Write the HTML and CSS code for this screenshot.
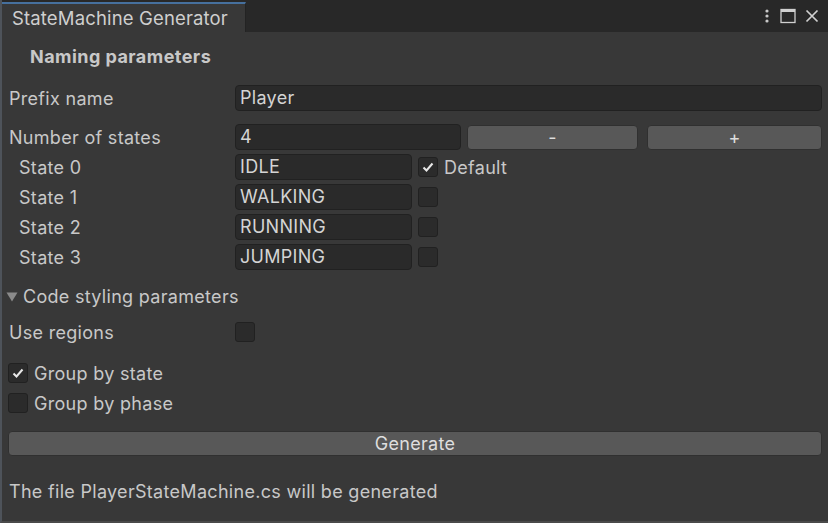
FILE: index.html
```html
<!DOCTYPE html>
<html>
<head>
<meta charset="utf-8">
<link rel="stylesheet" href="styles.css">
</head>
<body>
<div class="window">
  <div class="titlebar">
    <div class="tab">StateMachine Generator</div>
    <div class="actions">
      <svg class="icon" width="10" height="16" viewBox="0 0 10 16"><circle cx="5" cy="3" r="1.6" fill="#c8c8c8"/><circle cx="5" cy="8" r="1.6" fill="#c8c8c8"/><circle cx="5" cy="13" r="1.6" fill="#c8c8c8"/></svg>
      <svg class="icon" width="16" height="16" viewBox="0 0 16 16"><rect x="1" y="1.5" width="14" height="13" fill="none" stroke="#d0d0d0" stroke-width="1.3"/><rect x="1" y="1" width="14" height="3" fill="#d0d0d0"/></svg>
      <svg class="icon" width="16" height="16" viewBox="0 0 16 16"><path d="M2.5 2.5 L13.5 13.5 M13.5 2.5 L2.5 13.5" stroke="#d0d0d0" stroke-width="1.7"/></svg>
    </div>
  </div>
  <div class="content">
    <div class="section-title">Naming parameters</div>
    <div class="row prefix">
      <div class="label">Prefix name</div>
      <div class="field grow">Player</div>
    </div>
    <div class="row count">
      <div class="label">Number of states</div>
      <div class="field num">4</div>
      <div class="btn minus">-</div>
      <div class="btn plus">+</div>
    </div>
    <div class="states">
      <div class="row state">
        <div class="label indent">State 0</div>
        <div class="field short">IDLE</div>
        <div class="check on"><svg width="14" height="14" viewBox="0 0 14 14"><path d="M2.5 7.5 L5.5 10.5 L11.5 3.5" fill="none" stroke="#e8e8e8" stroke-width="2"/></svg></div>
        <div class="check-label">Default</div>
      </div>
      <div class="row state">
        <div class="label indent">State 1</div>
        <div class="field short">WALKING</div>
        <div class="check"></div>
      </div>
      <div class="row state">
        <div class="label indent">State 2</div>
        <div class="field short">RUNNING</div>
        <div class="check"></div>
      </div>
      <div class="row state">
        <div class="label indent">State 3</div>
        <div class="field short">JUMPING</div>
        <div class="check"></div>
      </div>
    </div>
    <div class="foldout">
      <svg class="tri" width="12" height="10" viewBox="0 0 12 10"><path d="M0.5 0.5 L11.5 0.5 L6 9.5 Z" fill="#8a8a8a"/></svg>
      <span>Code styling parameters</span>
    </div>
    <div class="row toggle regions">
      <div class="label">Use regions</div>
      <div class="check"></div>
    </div>
    <div class="row toggle group-state">
      <div class="check left on"><svg width="14" height="14" viewBox="0 0 14 14"><path d="M2.5 7.5 L5.5 10.5 L11.5 3.5" fill="none" stroke="#e8e8e8" stroke-width="2"/></svg></div>
      <div class="check-label">Group by state</div>
    </div>
    <div class="row toggle group-phase">
      <div class="check left"></div>
      <div class="check-label">Group by phase</div>
    </div>
    <div class="btn generate">Generate</div>
    <div class="note">The file PlayerStateMachine.cs will be generated</div>
  </div>
</div>
</body>
</html>
```

FILE: styles.css
```css
html, body {
  margin: 0;
  padding: 0;
  background: #282828;
}
body {
  font-family: Inter, "Noto Sans", sans-serif;
  font-size: 18px;
  letter-spacing: 0.3px;
  color: #c8c8c8;
}
.window {
  width: 828px;
  height: 523px;
  box-sizing: border-box;
  background: #383838;
  border-left: 2px solid #4e535a;
  border-bottom: 2px solid #4a4a4a;
  display: flex;
  flex-direction: column;
  overflow: hidden;
}
.titlebar {
  height: 32px;
  flex: none;
  background: #282828;
  display: flex;
  align-items: stretch;
}
.tab {
  margin-top: 2px;
  width: 244px;
  box-sizing: border-box;
  border-top: 2px solid #46709e;
  border-right: 1px solid #232323;
  background: #383838;
  padding-left: 10px;
  display: flex;
  align-items: center;
  font-size: 18.5px;
  letter-spacing: 0.15px;
  color: #cfcfcf;
}
.actions {
  margin-left: auto;
  display: flex;
  align-items: center;
  gap: 8px;
  padding-right: 8px;
}
.icon {
  display: block;
}
.content {
  padding: 0 6px 0 7px;
  display: flex;
  flex-direction: column;
}
.section-title {
  margin-top: 12px;
  height: 26px;
  line-height: 26px;
  padding-left: 21px;
  font-weight: 700;
  letter-spacing: 0.45px;
  color: #c8c8c8;
}
.row {
  display: flex;
  align-items: center;
  height: 26px;
}
.label {
  width: 226px;
  flex: none;
}
.label.indent {
  padding-left: 10px;
  box-sizing: border-box;
}
.field {
  height: 26px;
  box-sizing: border-box;
  background: #2a2a2a;
  border: 1px solid #212121;
  border-radius: 4px;
  padding-left: 4px;
  line-height: 24px;
  color: #d4d4d4;
}
.field.grow {
  flex: 1;
}
.prefix {
  margin-top: 15px;
}
.count {
  margin-top: 13px;
}
.field.num {
  width: 226px;
  flex: none;
}
.btn {
  height: 25px;
  box-sizing: border-box;
  background: #585858;
  border: 1px solid #303030;
  border-radius: 4px;
  display: flex;
  align-items: center;
  justify-content: center;
  color: #dedede;
}
.btn.minus {
  flex: 171;
  margin-left: 6px;
}
.btn.plus {
  flex: 175;
  margin-left: 9px;
}
.states {
  margin-top: 4px;
  display: flex;
  flex-direction: column;
  gap: 4px;
}
.field.short {
  width: 177px;
  flex: none;
}
.check {
  width: 20px;
  height: 20px;
  box-sizing: border-box;
  background: #2b2b2b;
  border: 1px solid #212121;
  border-radius: 3px;
  flex: none;
  display: flex;
  align-items: center;
  justify-content: center;
}
.state .check {
  margin-left: 6px;
}
.check-label {
  margin-left: 6px;
}
.foldout {
  margin-top: 15px;
  height: 22px;
  display: flex;
  align-items: center;
  margin-left: -3px;
}
.tri {
  margin-right: 5px;
  margin-top: 1px;
}
.toggle {
  height: 20px;
}
.regions {
  margin-top: 15px;
}
.group-state {
  margin-top: 21px;
}
.group-phase {
  margin-top: 10px;
}
.check.left {
  margin-left: -1px;
}
.btn.generate {
  margin-top: 18px;
  height: 25px;
  margin-left: -1px;
}
.note {
  margin-top: 25px;
  height: 22px;
  line-height: 22px;
}
```
